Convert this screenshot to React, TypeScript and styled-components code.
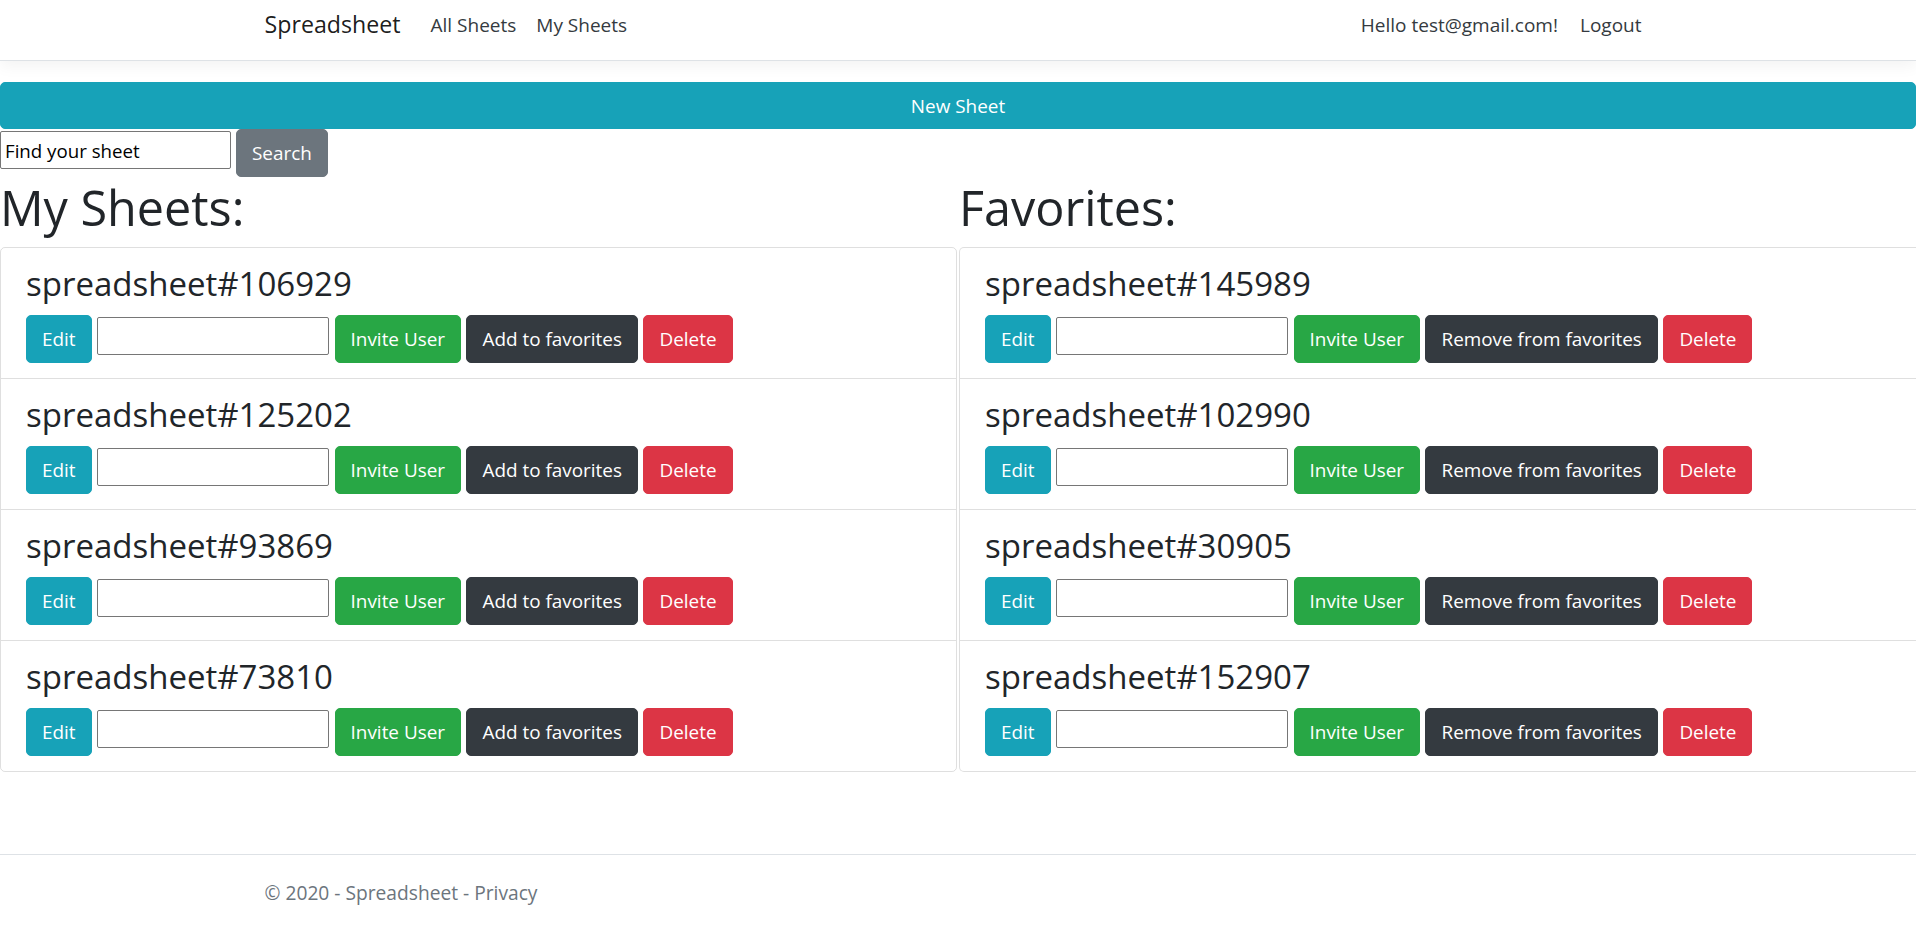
import React from "react";
import styled, { createGlobalStyle, css } from "styled-components";

const GlobalStyle = createGlobalStyle`
  html, body { margin: 0; padding: 0; }
  body {
    font-family: "Open Sans", "Noto Sans", "DejaVu Sans", sans-serif;
    color: #212529;
    background: #fff;
    overflow-x: hidden;
  }
  * { box-sizing: border-box; }
`;

const FONT = `"Open Sans", "Noto Sans", "DejaVu Sans", sans-serif`;

const Page = styled.div`
  min-height: 100vh;
  display: flex;
  flex-direction: column;
`;

const Navbar = styled.nav`
  height: 61px;
  padding: 3px 0 13px;
  background: #fff;
  border-bottom: 1px solid #dee2e6;
  box-shadow: 0 5px 15px rgba(0, 0, 0, 0.05);
`;

const Container = styled.div`
  max-width: 1425px;
  margin: 0 auto;
  padding: 0 19px;
`;

const NavInner = styled(Container)`
  height: 44px;
  display: flex;
  align-items: center;
`;

const Brand = styled.a`
  font-size: 23.2px;
  line-height: 37.5px;
  color: rgba(0, 0, 0, 0.9);
  margin-right: 20px;
  text-decoration: none;
  white-space: nowrap;
`;

const NavList = styled.div<{ $end?: boolean }>`
  display: flex;
  align-items: center;
  ${(p) => p.$end && css`margin-left: auto;`}
`;

const NavLink = styled.a<{ $padLeft?: number }>`
  font-size: 19px;
  line-height: 30px;
  padding: 0 10px 0 ${(p) => p.$padLeft ?? 10}px;
  color: #343a40;
  text-decoration: none;
  white-space: nowrap;
`;

const Main = styled.main`
  flex: 1;
  padding-top: 21px;
`;

const variants = {
  info: "#17a2b8",
  success: "#28a745",
  dark: "#343a40",
  danger: "#dc3545",
  secondary: "#6c757d",
};

type Variant = keyof typeof variants;

const Button = styled.button<{ $variant: Variant }>`
  font-family: ${FONT};
  font-size: 18.9px;
  line-height: 30px;
  height: 48px;
  padding: 8px 15px;
  border-radius: 5px;
  border: 1px solid ${(p) => variants[p.$variant]};
  background: ${(p) => variants[p.$variant]};
  color: #fff;
  white-space: nowrap;
  cursor: pointer;
  flex: none;
`;

const NewSheetButton = styled(Button)`
  display: block;
  width: 100%;
  height: 47px;
  padding: 7px 15px;
`;

const SearchRow = styled.form`
  display: flex;
  align-items: flex-start;
  gap: 5px;
`;

const TextInput = styled.input`
  font-family: ${FONT};
  font-size: 18.7px;
  line-height: 30px;
  color: #000;
  width: 232px;
  height: 38px;
  margin-top: 2px;
  padding: 1px 4px;
  border: 1px solid #767676;
  border-radius: 2px;
  background: #fff;
  flex: none;
  &::placeholder { color: #000; opacity: 1; }
`;

const SearchInput = styled(TextInput)`
  width: 231px;
`;

const Sections = styled.div`
  display: grid;
  grid-template-columns: 957px 1fr;
  column-gap: 2px;
`;

const Column = styled.section`
  min-width: 0;
`;

const SectionTitle = styled.h1`
  font-size: 48.5px;
  line-height: 60px;
  font-weight: 400;
  margin: 0 0 10px;
  white-space: nowrap;
`;

const Card = styled.ul<{ $openRight?: boolean }>`
  list-style: none;
  margin: 0;
  padding: 0;
  border: 1px solid rgba(0, 0, 0, 0.125);
  border-radius: 5px;
  ${(p) =>
    p.$openRight &&
    css`
      border-right: none;
      border-top-right-radius: 0;
      border-bottom-right-radius: 0;
    `}
`;

const Item = styled.li`
  padding: 15px 25px;
  & + & { border-top: 1px solid rgba(0, 0, 0, 0.125); }
`;

const SheetName = styled.h3`
  font-size: 33px;
  line-height: 42px;
  font-weight: 400;
  margin: 0 0 10px;
  white-space: nowrap;
`;

const Actions = styled.div`
  display: flex;
  align-items: flex-start;
  gap: 5.5px;
`;

const Footer = styled.footer`
  border-top: 1px solid #dee2e6;
  height: 76px;
  color: #6c757d;
  font-size: 19.2px;
  line-height: 75px;
  white-space: nowrap;
`;

const FooterLink = styled.a`
  color: inherit;
  text-decoration: none;
`;

const mySheets = ["106929", "125202", "93869", "73810"];
const favorites = ["145989", "102990", "30905", "152907"];

function SheetItem({ id, favorite }: { id: string; favorite: boolean }) {
  return (
    <Item>
      <SheetName>spreadsheet#{id}</SheetName>
      <Actions>
        <Button $variant="info">Edit</Button>
        <TextInput type="text" aria-label="User email" />
        <Button $variant="success">Invite User</Button>
        <Button $variant="dark">{favorite ? "Remove from favorites" : "Add to favorites"}</Button>
        <Button $variant="danger">Delete</Button>
      </Actions>
    </Item>
  );
}

export default function App() {
  return (
    <>
      <GlobalStyle />
      <Page>
        <Navbar>
          <NavInner>
            <Brand href="#">Spreadsheet</Brand>
            <NavList>
              <NavLink href="#">All Sheets</NavLink>
              <NavLink href="#">My Sheets</NavLink>
            </NavList>
            <NavList $end>
              <NavLink href="#">Hello test@gmail.com!</NavLink>
              <NavLink href="#" $padLeft={12}>Logout</NavLink>
            </NavList>
          </NavInner>
        </Navbar>
        <Main>
          <NewSheetButton $variant="info">New Sheet</NewSheetButton>
          <SearchRow onSubmit={(e) => e.preventDefault()}>
            <SearchInput type="text" placeholder="Find your sheet" />
            <Button $variant="secondary">Search</Button>
          </SearchRow>
          <Sections>
            <Column>
              <SectionTitle>My Sheets:</SectionTitle>
              <Card>
                {mySheets.map((id) => (
                  <SheetItem key={id} id={id} favorite={false} />
                ))}
              </Card>
            </Column>
            <Column>
              <SectionTitle>Favorites:</SectionTitle>
              <Card $openRight>
                {favorites.map((id) => (
                  <SheetItem key={id} id={id} favorite />
                ))}
              </Card>
            </Column>
          </Sections>
        </Main>
        <Footer>
          <Container>
            © 2020 - Spreadsheet - <FooterLink href="#">Privacy</FooterLink>
          </Container>
        </Footer>
      </Page>
    </>
  );
}
